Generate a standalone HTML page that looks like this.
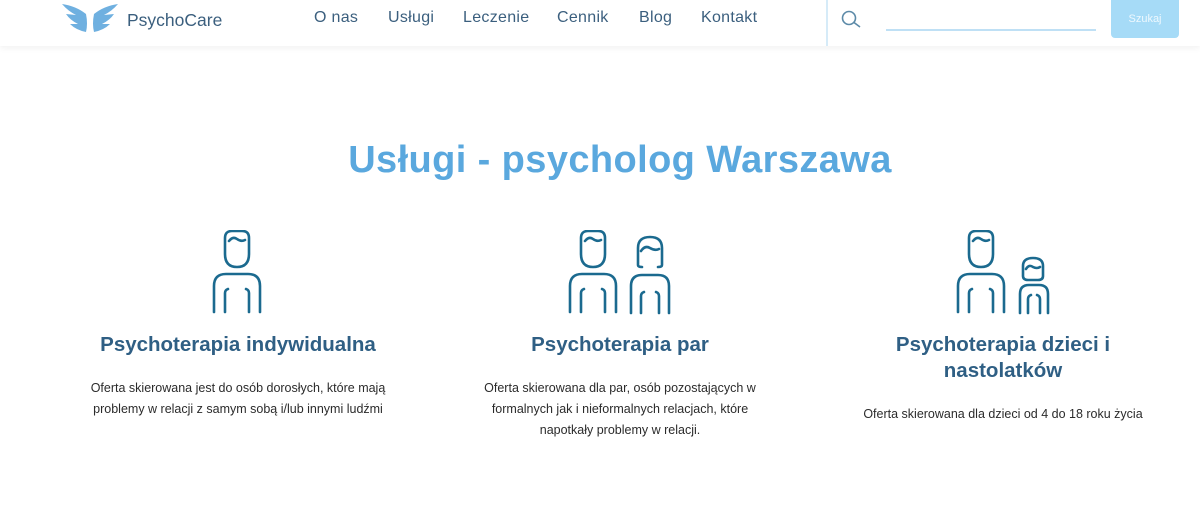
<!DOCTYPE html>
<html><head><meta charset="utf-8"><style>
body{margin:0;width:1200px;height:511px;background:#fff;font-family:"Liberation Sans",sans-serif;overflow:hidden;position:relative}
.hdr{position:absolute;left:0;top:0;width:1200px;height:46px;background:#fff;box-shadow:0 2px 6px rgba(0,0,0,.06)}
.logo{position:absolute;left:62px;top:2px}
.brand{position:absolute;left:127px;top:10px;font-size:17.5px;color:#3b5f7e}
.nav{position:absolute;top:9px;font-size:16px;color:#3b5f7e;letter-spacing:.3px}
.vline{position:absolute;left:826px;top:0;width:2px;height:46px;background:#d6ebf8}
.inp{position:absolute;left:886px;top:29px;width:210px;height:2px;background:#bfe0f5}
.btn{position:absolute;left:1111px;top:0;width:68px;height:38px;background:#a6dbf7;border-radius:0 0 4px 4px;color:#eef8fe;font-size:11px;text-align:center;line-height:38px}
h1{position:absolute;top:139px;left:0;width:1240px;text-align:center;margin:0;font-size:38px;letter-spacing:.4px;color:#5aa8de;font-weight:bold}
.col{position:absolute;text-align:center}
.col h2{margin:0;font-size:20.5px;color:#2f5f84;line-height:26px}
.col p{margin:0;font-size:12.5px;color:#2b2b2b;line-height:21px}
svg.i{position:absolute}
</style></head><body>
<div class="hdr">
<svg class="logo" width="56" height="32" viewBox="0 0 56 32"><g fill="#6fb0e0">
<path d="M0 2 Q14 4 24 12 Q26 22 24 30 Q14 28 8 22 L16 22 Q8 18 4 12 L14 13 Q6 9 0 2Z"/>
<path d="M56 2 Q42 4 32 12 Q30 22 32 30 Q42 28 48 22 L40 22 Q48 18 52 12 L42 13 Q50 9 56 2Z"/></g></svg>
<div class="brand">PsychoCare</div>
<div class="nav" style="left:314px">O nas</div>
<div class="nav" style="left:388px">Usługi</div>
<div class="nav" style="left:463px">Leczenie</div>
<div class="nav" style="left:557px">Cennik</div>
<div class="nav" style="left:639px">Blog</div>
<div class="nav" style="left:701px">Kontakt</div>
<div class="vline"></div>
<svg style="position:absolute;left:841px;top:10px" width="22" height="18" viewBox="0 0 22 18"><circle cx="8" cy="8" r="6.5" fill="none" stroke="#5c8aa8" stroke-width="1.6"/><path d="M13 12.5 L19 17" stroke="#5c8aa8" stroke-width="1.6"/></svg>
<div class="inp"></div>
<div class="btn">Szukaj</div>
</div>
<h1>Usługi - psycholog Warszawa</h1>

<svg width="0" height="0" style="position:absolute"><defs>
<g id="man" fill="none" stroke="#1b6a8f" stroke-width="2.6" stroke-linecap="round">
<path d="M13 8 Q13 1 20 1 H30 Q37 1 37 8 V24 Q37 37 25 37 Q13 37 13 24Z"/>
<path d="M17 11 Q21 6 25 9 Q29 12 33 10"/>
<path d="M2 82 V56 Q2 44 14 44 H36 Q48 44 48 56 V82"/>
<path d="M13 82 V63 Q13 60 16 59"/><path d="M37 82 V63 Q37 60 34 59"/></g>
</defs></svg>

<svg class="i" style="left:212px;top:230px" width="52" height="85" viewBox="0 0 52 85"><use href="#man"/></svg>
<svg class="i" style="left:568px;top:230px" width="52" height="85" viewBox="0 0 52 85"><use href="#man"/></svg>
<svg class="i" style="left:628px;top:235px" width="46" height="80" viewBox="0 0 46 80"><g fill="none" stroke="#1b6a8f" stroke-width="2.6" stroke-linecap="round"><path d="M10 30 V13 Q10 2 22 2 Q34 2 34 13 V30 Q34 32 30 32 M14 32 Q10 32 10 30"/><path d="M13 16 Q17 10 22 13 Q27 16 31 14"/><path d="M3 78 V51 Q3 40 14 40 H30 Q41 40 41 51 V78"/><path d="M13 78 V61 Q13 58 16 57"/><path d="M31 78 V61 Q31 58 28 57"/></g></svg>
<svg class="i" style="left:956px;top:230px" width="52" height="85" viewBox="0 0 52 85"><use href="#man"/></svg>
<svg class="i" style="left:1018px;top:256px" width="32" height="59" viewBox="0 0 32 59"><g fill="none" stroke="#1b6a8f" stroke-width="2.6" stroke-linecap="round"><path d="M5 20 V10 Q5 2 15 2 Q25 2 25 10 V20 Q25 24 20 24 H10 Q5 24 5 20Z"/><path d="M8 13 Q11 8 15 11 Q19 13 22 11"/><path d="M2 57 V38 Q2 29 11 29 H21 Q30 29 30 38 V57"/><path d="M10 57 V43 Q10 40 13 39"/><path d="M22 57 V43 Q22 40 19 39"/></g></svg>

<div class="col" style="left:68px;width:340px;top:332px"><h2>Psychoterapia indywidualna</h2><p style="margin-top:20px">Oferta skierowana jest do osób dorosłych, które mają<br>problemy w relacji z samym sobą i/lub innymi ludźmi</p></div>
<div class="col" style="left:450px;width:340px;top:332px"><h2>Psychoterapia par</h2><p style="margin-top:20px">Oferta skierowana dla par, osób pozostających w<br>formalnych jak i nieformalnych relacjach, które<br>napotkały problemy w relacji.</p></div>
<div class="col" style="left:833px;width:340px;top:332px"><h2>Psychoterapia dzieci i<br>nastolatków</h2><p style="margin-top:20px">Oferta skierowana dla dzieci od 4 do 18 roku życia</p></div>
</body></html>
